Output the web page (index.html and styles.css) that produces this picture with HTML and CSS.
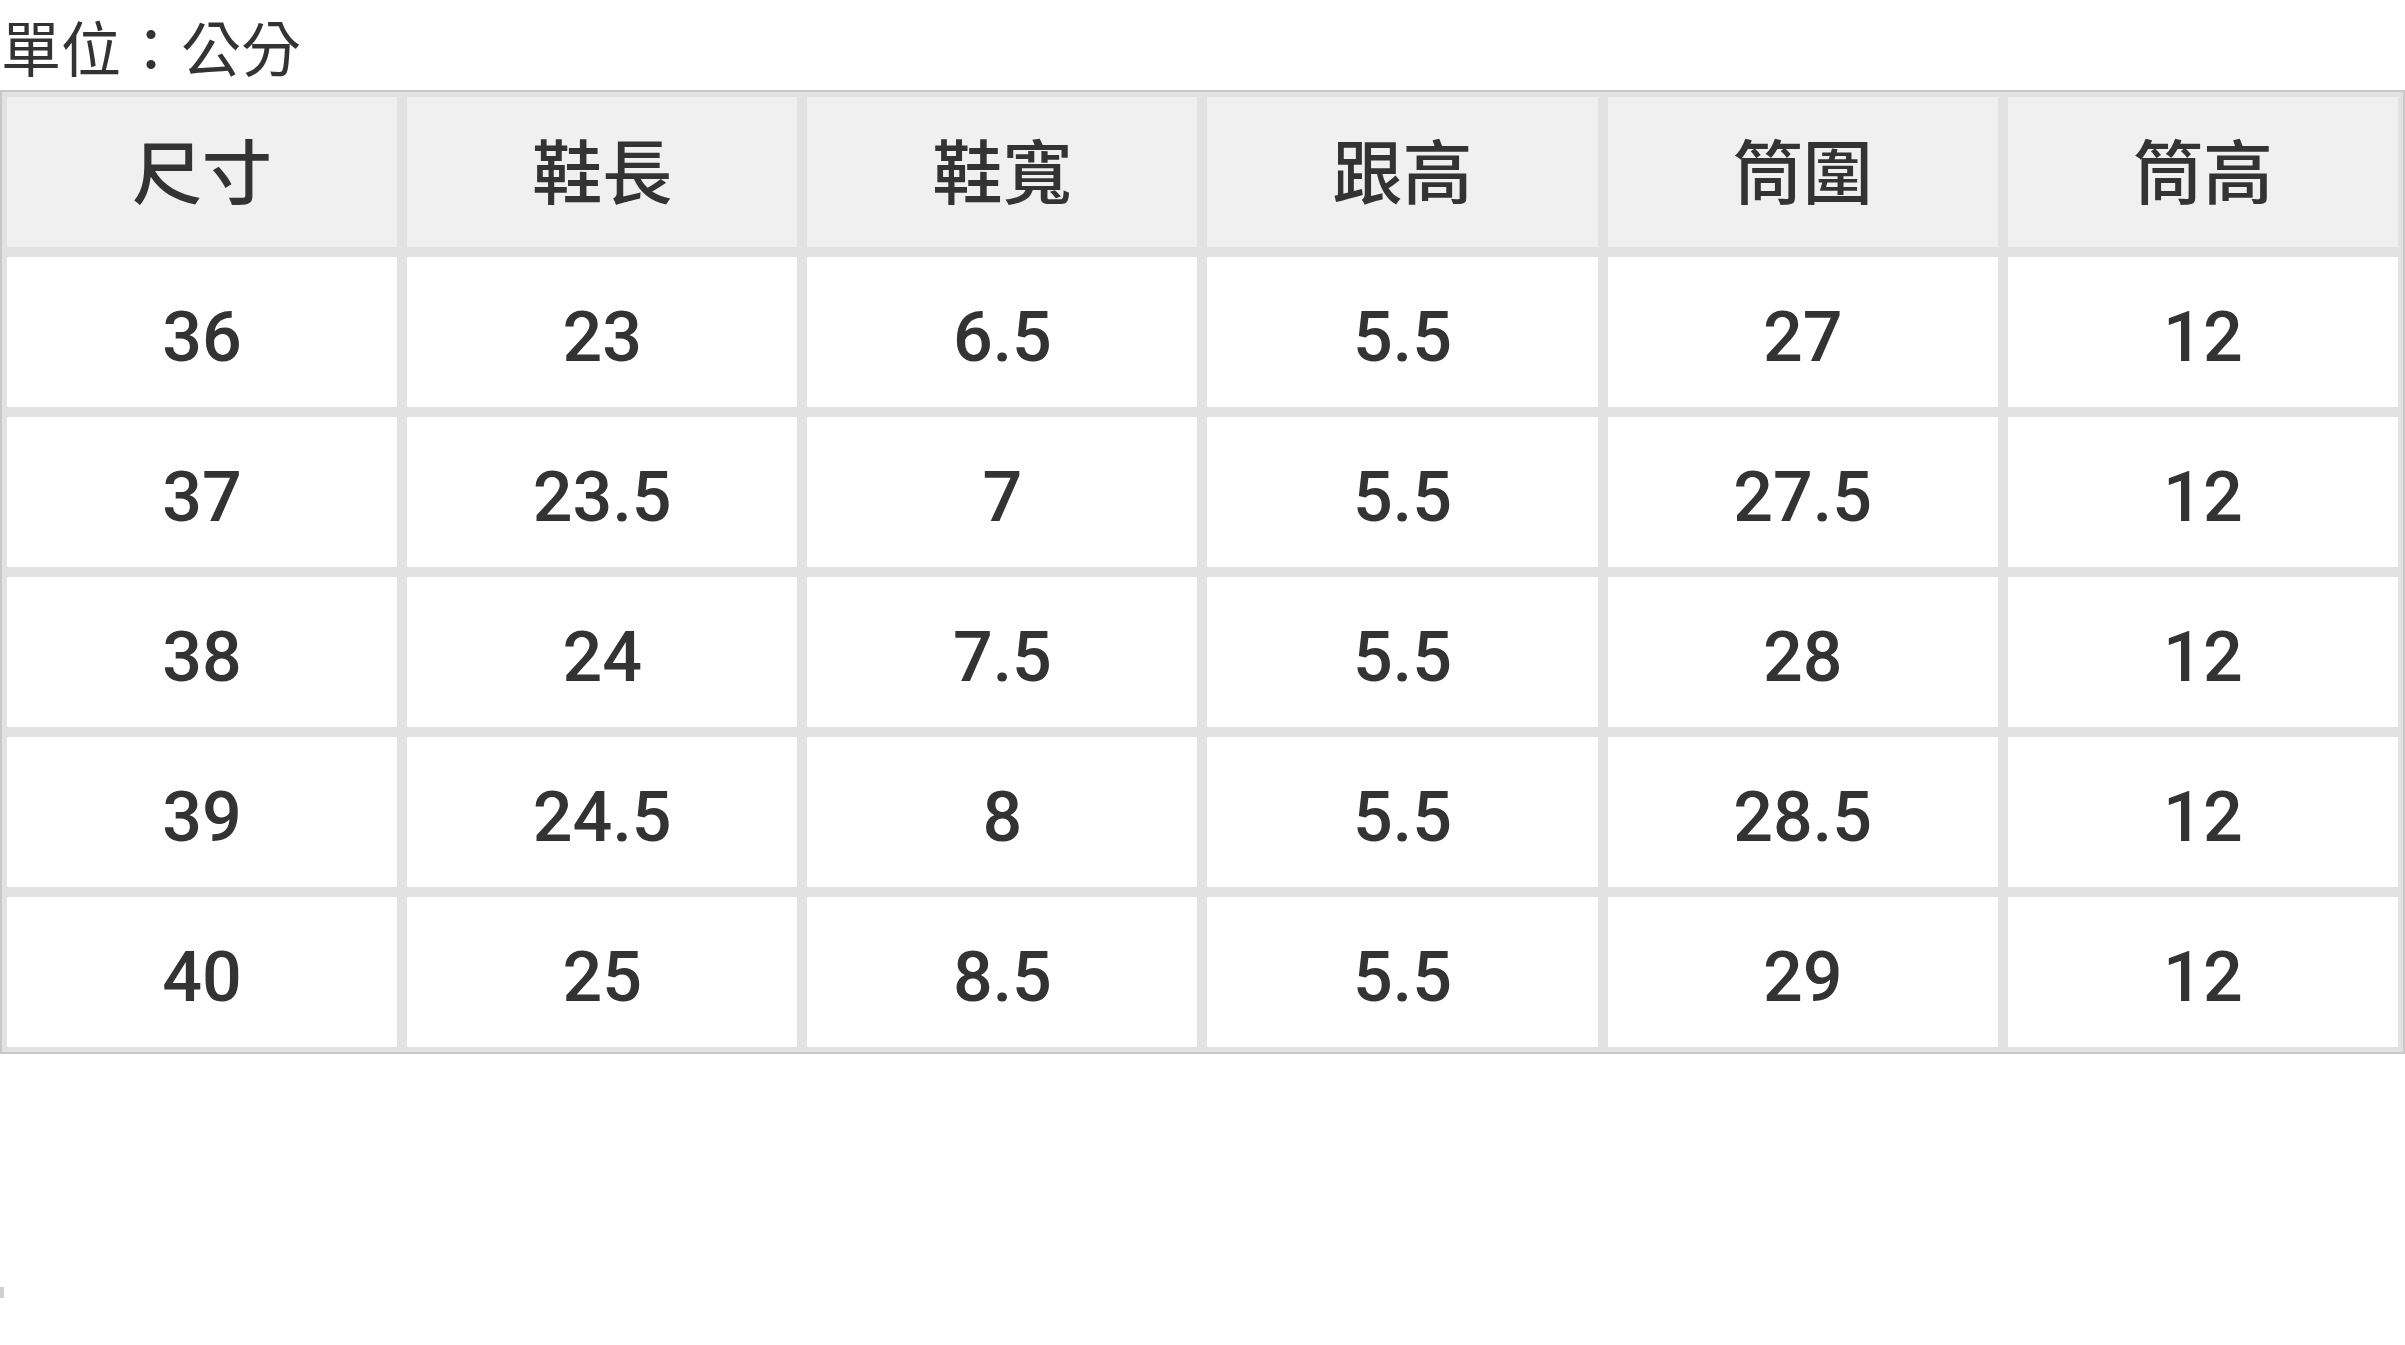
FILE: index.html
```html
<!DOCTYPE html>
<html lang="zh-Hant">
<head>
<meta charset="utf-8">
<title>尺寸表</title>
<link rel="stylesheet" href="styles.css">
</head>
<body>
<div class="unit">單位：公分</div>
<table class="size-table">
  <thead>
    <tr><th>尺寸</th><th>鞋長</th><th>鞋寬</th><th>跟高</th><th>筒圍</th><th>筒高</th></tr>
  </thead>
  <tbody>
    <tr><td>36</td><td>23</td><td>6.5</td><td>5.5</td><td>27</td><td>12</td></tr>
    <tr><td>37</td><td>23.5</td><td>7</td><td>5.5</td><td>27.5</td><td>12</td></tr>
    <tr><td>38</td><td>24</td><td>7.5</td><td>5.5</td><td>28</td><td>12</td></tr>
    <tr><td>39</td><td>24.5</td><td>8</td><td>5.5</td><td>28.5</td><td>12</td></tr>
    <tr><td>40</td><td>25</td><td>8.5</td><td>5.5</td><td>29</td><td>12</td></tr>
  </tbody>
</table>
<div class="mark"></div>
</body>
</html>
```

FILE: styles.css
```css
html, body {
  margin: 0;
  padding: 0;
  background: #ffffff;
}
body {
  font-family: "Noto Sans CJK TC", "Noto Sans", sans-serif;
  color: #333333;
}
.unit {
  height: 90px;
  line-height: 92px;
  font-size: 60px;
  padding-left: 1px;
  color: #333333;
  overflow: hidden;
}
.size-table {
  width: 2405px;
  border: 2px solid #c8c8c8;
  border-spacing: 0;
  table-layout: fixed;
}
.size-table th,
.size-table td {
  box-sizing: border-box;
  height: 160px;
  padding: 0;
  border: 5px solid #e2e2e2;
  text-align: center;
  vertical-align: middle;
  font-family: Roboto, "Noto Sans CJK TC", sans-serif;
  font-size: 70px;
  font-weight: 500;
  color: #333333;
  line-height: 1;
}
.size-table th {
  background: #f0f0f0;
  padding-top: 5px;
}
.size-table td {
  background: #ffffff;
  padding-top: 10px;
}
.mark {
  margin-top: 233px;
  width: 4px;
  height: 11px;
  background: #d0d0d0;
}
```
